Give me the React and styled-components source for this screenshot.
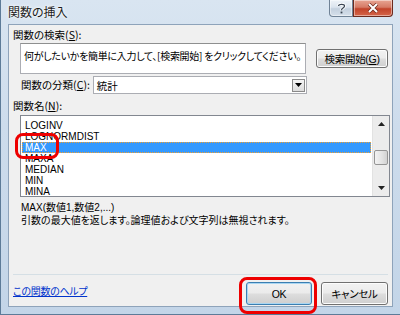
import styled, { createGlobalStyle } from "styled-components";

const Global = createGlobalStyle`
  html, body {
    margin: 0;
    padding: 0;
    background: #ffffff;
  }
  body {
    font-family: "Liberation Sans", "Noto Sans CJK JP", sans-serif;
    font-size: 11px;
    color: #000;
  }
`;

const Window = styled.div`
  position: relative;
  width: 400px;
  height: 315px;
  box-sizing: border-box;
  padding: 0 7px 7px 7px;
  display: flex;
  flex-direction: column;
  background: linear-gradient(180deg, #d9e5f1 0%, #cddcec 40%, #c3d5e8 100%);
  border-left: 1px solid #5d7b98;
  border-bottom: 1px solid #5d7b98;
  overflow: hidden;
`;

const TitleBar = styled.div`
  height: 24px;
  display: flex;
  align-items: flex-start;
  justify-content: space-between;
  flex-shrink: 0;
`;

const Title = styled.div`
  font-family: "Noto Sans CJK JP", sans-serif;
  font-size: 12px;
  line-height: 12px;
  margin-top: 6px;
  color: #1b1b1b;
  text-shadow: 0 0 4px #ffffff, 0 0 2px #ffffff;
  font-feature-settings: "palt";
`;

const Controls = styled.div`
  display: flex;
`;

const CtrlBtn = styled.div`
  width: ${(p) => p.$w}px;
  height: 17px;
  box-sizing: border-box;
  border: 1px solid ${(p) => (p.$close ? "#6b2a1e" : "#6f8296")};
  border-top: none;
  border-radius: ${(p) => (p.$close ? "0 0 4px 0" : "0 0 0 4px")};
  background: ${(p) =>
    p.$close
      ? "linear-gradient(180deg, #e8a593 0%, #d67b66 45%, #c2432a 55%, #d5664a 100%)"
      : "linear-gradient(180deg, #eef3f8 0%, #dbe4ee 45%, #c3d0de 55%, #d5e0eb 100%)"};
  display: flex;
  align-items: center;
  justify-content: center;
  box-shadow: inset 0 0 0 1px rgba(255, 255, 255, 0.45);
`;

const Panel = styled.div`
  flex: 1;
  display: flex;
  flex-direction: column;
  background: #f0f0f0;
  border: 1px solid #8ea3ba;
  padding: 4px 4px 0 4px;
`;

const Label = styled.div`
  font-family: "Noto Sans CJK JP", sans-serif;
  font-size: 10.5px;
  line-height: 12px;
  height: 12px;
  margin-top: ${(p) => p.$mt || 0}px;
  font-feature-settings: "palt";
  white-space: nowrap;
  u {
    text-decoration: underline;
  }
`;

const SearchRow = styled.div`
  display: flex;
  align-items: flex-start;
  margin-top: 2px;
  margin-left: 7px;
`;

const SearchBox = styled.div`
  width: 287px;
  height: 31px;
  box-sizing: border-box;
  background: #fff;
  border: 1px solid #abadb3;
  border-top-color: #8e8f8f;
  padding: 6px 3px;
  font-family: "Noto Sans CJK JP", sans-serif;
  font-size: 10px;
  line-height: 12px;
  letter-spacing: -0.3px;
  font-feature-settings: "palt";
  white-space: nowrap;
  overflow: hidden;
`;

const Button = styled.div`
  box-sizing: border-box;
  width: ${(p) => p.$w}px;
  height: ${(p) => p.$h}px;
  margin-left: ${(p) => p.$ml || 0}px;
  margin-top: ${(p) => p.$mt || 0}px;
  border: 1px solid ${(p) => (p.$default ? "#3c7fb1" : "#707070")};
  border-radius: 3px;
  background: linear-gradient(180deg, #f2f2f2 0%, #ebebeb 48%, #dddddd 52%, #cfcfcf 100%);
  box-shadow: inset 0 0 0 1px ${(p) => (p.$default ? "#a9d6f2" : "#fcfcfc")};
  display: flex;
  align-items: center;
  justify-content: center;
  font-family: "Liberation Sans", "Noto Sans CJK JP", sans-serif;
  font-size: 10.5px;
  letter-spacing: -0.3px;
  font-feature-settings: "palt";
  white-space: nowrap;
  u {
    text-decoration: underline;
  }
`;

const CategoryRow = styled.div`
  display: flex;
  align-items: center;
  margin-top: 2px;
  margin-left: 8px;
  height: 18px;
`;

const Select = styled.div`
  margin-left: 3px;
  width: 214px;
  height: 18px;
  box-sizing: border-box;
  background: #fff;
  border: 1px solid #abadb3;
  display: flex;
  align-items: center;
  justify-content: space-between;
  padding-left: 3px;
  padding-right: 1px;
  font-family: "Noto Sans CJK JP", sans-serif;
  font-size: 10.5px;
`;

const DropBtn = styled.div`
  width: 13px;
  height: 13px;
  box-sizing: border-box;
  border: 1px solid #8a8a8a;
  background: linear-gradient(180deg, #f5f5f5, #dcdcdc);
  display: flex;
  align-items: center;
  justify-content: center;
`;

const ListBox = styled.div`
  margin-top: 3px;
  margin-left: 7px;
  width: 370px;
  height: 82px;
  box-sizing: border-box;
  background: #fff;
  border: 1px solid #828790;
  display: flex;
`;

const Items = styled.div`
  flex: 1;
  padding: 4px 1px 0 1px;
  overflow: hidden;
`;

const Item = styled.div`
  height: 11px;
  line-height: 11px;
  box-sizing: border-box;
  padding-left: 3px;
  font-family: "Liberation Sans", sans-serif;
  font-size: 10px;
  color: ${(p) => (p.$sel ? "#ffffff" : "#000")};
  background: ${(p) => (p.$sel ? "#3399ff" : "transparent")};
  outline: ${(p) => (p.$sel ? "1px dotted #f0a030" : "none")};
  outline-offset: -1px;
`;

const ScrollBar = styled.div`
  width: 16px;
  background: #ececec;
  border-left: 1px solid #e2e2e2;
  display: flex;
  flex-direction: column;
  align-items: center;
`;

const Arrow = styled.div`
  height: 16px;
  display: flex;
  align-items: center;
  justify-content: center;
`;

const Thumb = styled.div`
  width: 14px;
  height: 15px;
  box-sizing: border-box;
  margin-top: 18px;
  border: 1px solid #959595;
  border-radius: 2px;
  background: linear-gradient(90deg, #f3f3f3, #e2e2e2 60%, #d2d2d2);
`;

const Spacer = styled.div`
  flex: 1;
`;

const Desc = styled.div`
  margin-top: 4px;
  margin-left: 8px;
  font-family: "Liberation Sans", "Noto Sans CJK JP", sans-serif;
  font-size: 10px;
  line-height: 13px;
  font-feature-settings: "palt";
  white-space: nowrap;
`;

const Bottom = styled.div`
  margin-top: auto;
  border-top: 1px solid #d5dfe5;
  padding-top: 7px;
  padding-bottom: 1px;
  display: flex;
  align-items: center;
`;

const HelpLink = styled.a`
  font-family: "Noto Sans CJK JP", sans-serif;
  font-size: 10px;
  letter-spacing: -0.3px;
  color: #0033cc;
  text-decoration: underline;
  font-feature-settings: "palt";
  margin-right: auto;
  margin-top: -7px;
`;

const Mark = styled.div`
  position: absolute;
  left: ${(p) => p.$x}px;
  top: ${(p) => p.$y}px;
  width: ${(p) => p.$w}px;
  height: ${(p) => p.$h}px;
  box-sizing: border-box;
  border: 3px solid #ee0000;
  border-radius: 8px;
  pointer-events: none;
`;

const items = ["LOGINV", "LOGNORMDIST", "MAX", "MAXA", "MEDIAN", "MIN", "MINA"];

export default function App() {
  return (
    <>
      <Global />
      <Window>
        <TitleBar>
          <Title>関数の挿入</Title>
          <Controls>
            <CtrlBtn $w={24}>
              <svg width="9" height="11" viewBox="0 0 9 11">
                <path
                  d="M1.5 3 C1.5 0.8 7.5 0.8 7.5 3 C7.5 5 4.5 5 4.5 7.2"
                  fill="none"
                  stroke="#ffffff"
                  strokeWidth="3"
                />
                <path
                  d="M1.5 3 C1.5 0.8 7.5 0.8 7.5 3 C7.5 5 4.5 5 4.5 7.2"
                  fill="none"
                  stroke="#3a4654"
                  strokeWidth="1.3"
                />
                <rect x="3.6" y="8.6" width="1.8" height="1.8" fill="#3a4654" />
              </svg>
            </CtrlBtn>
            <CtrlBtn $w={40} $close>
              <svg width="12" height="10" viewBox="0 0 12 10">
                <path d="M2 1 L10 9 M10 1 L2 9" stroke="#6b2a1e" strokeWidth="3.4" />
                <path d="M2 1 L10 9 M10 1 L2 9" stroke="#ffffff" strokeWidth="2" />
              </svg>
            </CtrlBtn>
          </Controls>
        </TitleBar>
        <Panel>
          <Label>
            関数の検索(<u>S</u>):
          </Label>
          <SearchRow>
            <SearchBox>何がしたいかを簡単に入力して、[検索開始] をクリックしてください。</SearchBox>
            <Button $w={72} $h={19} $ml={10} $mt={6}>
              検索開始(<u>G</u>)
            </Button>
          </SearchRow>
          <CategoryRow>
            <Label>
              関数の分類(<u>C</u>):
            </Label>
            <Select>
              統計
              <DropBtn>
                <svg width="7" height="4" viewBox="0 0 7 4">
                  <path d="M0 0 H7 L3.5 4 Z" fill="#000" />
                </svg>
              </DropBtn>
            </Select>
          </CategoryRow>
          <Label $mt={6}>
            関数名(<u>N</u>):
          </Label>
          <ListBox>
            <Items>
              {items.map((it) => (
                <Item key={it} $sel={it === "MAX"}>
                  {it}
                </Item>
              ))}
            </Items>
            <ScrollBar>
              <Arrow>
                <svg width="7" height="4" viewBox="0 0 7 4">
                  <path d="M3.5 0 L7 4 H0 Z" fill="#222" />
                </svg>
              </Arrow>
              <Thumb />
              <Spacer />
              <Arrow>
                <svg width="7" height="4" viewBox="0 0 7 4">
                  <path d="M0 0 H7 L3.5 4 Z" fill="#222" />
                </svg>
              </Arrow>
            </ScrollBar>
          </ListBox>
          <Desc>
            <div>MAX(数値1,数値2,...)</div>
            <div>引数の最大値を返します。論理値および文字列は無視されます。</div>
          </Desc>
          <Bottom>
            <HelpLink href="#">この関数のヘルプ</HelpLink>
            <Button $w={66} $h={23} $default>
              OK
            </Button>
            <Button $w={67} $h={23} $ml={9}>
              キャンセル
            </Button>
          </Bottom>
        </Panel>
        <Mark $x={14} $y={133} $w={44} $h={26} />
        <Mark $x={238} $y={277} $w={78} $h={37} />
      </Window>
    </>
  );
}
